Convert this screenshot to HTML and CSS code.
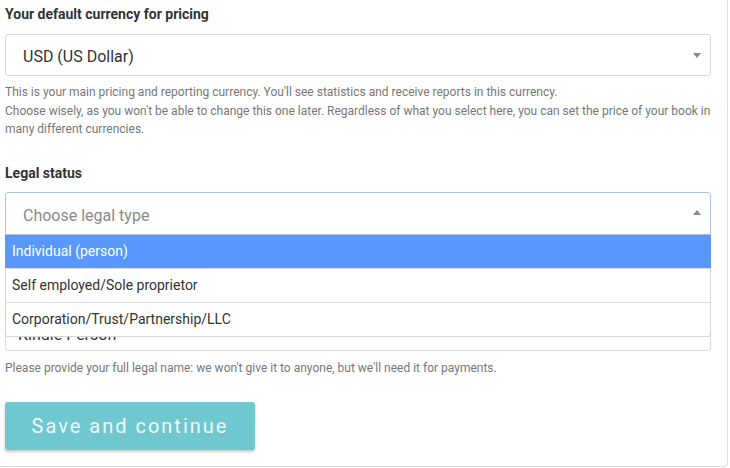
FILE: index.html
```html
<!DOCTYPE html>
<html>
<head>
<meta charset="utf-8">
<link rel="stylesheet" href="styles.css">
</head>
<body>
<div class="card">
  <div class="label label-first">Your default currency for pricing</div>
  <div class="select">
    <span class="select-value">USD (US Dollar)</span>
    <span class="caret caret-down"></span>
  </div>
  <p class="help">This is your main pricing and reporting currency. You'll see statistics and receive reports in this currency.<br>Choose wisely, as you won't be able to change this one later. Regardless of what you select here, you can set the price of your book in many different currencies.</p>

  <div class="label label-second">Legal status</div>
  <div class="select-wrap">
    <div class="select select-open">
      <span class="select-placeholder">Choose legal type</span>
      <span class="caret caret-up"></span>
    </div>
    <ul class="dropdown">
      <li class="option option-active">Individual (person)</li>
      <li class="option">Self employed/Sole proprietor</li>
      <li class="option">Corporation/Trust/Partnership/LLC</li>
    </ul>
  </div>

  <div class="spacer"></div>
  <div class="input">
    <span class="input-value">Kindle Person</span>
  </div>
  <p class="help help-name">Please provide your full legal name: we won't give it to anyone, but we'll need it for payments.</p>

  <button class="btn">Save and continue</button>
</div>
</body>
</html>
```

FILE: styles.css
```css
html, body {
  margin: 0;
  padding: 0;
  background: #fff;
}

body {
  font-family: Roboto, "Liberation Sans", Arial, sans-serif;
  color: #333;
}

.card {
  box-sizing: border-box;
  width: 728px;
  height: 467px;
  padding: 4px 16px 0 5px;
  border-right: 1px solid #dcdcdc;
  border-bottom: 1px solid #dcdcdc;
  border-bottom-right-radius: 4px;
  display: flex;
  flex-direction: column;
  align-items: stretch;
}

.label {
  font-size: 14px;
  font-weight: 700;
  line-height: 20px;
  color: #333;
}

.label-first {
  margin-bottom: 10px;
}

.label-second {
  margin-top: 24px;
  margin-bottom: 9px;
}

.select {
  position: relative;
  box-sizing: border-box;
  height: 42px;
  border: 1px solid #d9d9d9;
  border-radius: 3px;
  display: flex;
  align-items: center;
  padding-left: 17px;
  padding-top: 3px;
  font-size: 16px;
  color: #333;
}

.select-open {
  height: 43px;
  padding-top: 4px;
  border-color: #a9c2ea;
  border-bottom-left-radius: 0;
  border-bottom-right-radius: 0;
}

.select-placeholder {
  color: #8a8a8a;
}

.caret {
  position: absolute;
  right: 9px;
  top: 50%;
  width: 0;
  height: 0;
  border-left: 4px solid transparent;
  border-right: 4px solid transparent;
}

.caret-down {
  margin-top: -2px;
  border-top: 5px solid #888;
}

.caret-up {
  margin-top: -3px;
  border-bottom: 5px solid #888;
}

.help {
  margin: 7px 0 0;
  font-size: 12px;
  line-height: 18.5px;
  color: #777;
}

.select-wrap {
  position: relative;
}

.dropdown {
  position: absolute;
  left: 0;
  right: 0;
  top: 100%;
  margin: 0;
  padding: 0;
  list-style: none;
  background: #fff;
  border: 1px solid #d6d6d6;
  border-top: none;
  border-bottom-left-radius: 3px;
  border-bottom-right-radius: 3px;
  z-index: 2;
}

.option {
  box-sizing: border-box;
  height: 34px;
  padding-left: 6px;
  display: flex;
  align-items: center;
  font-size: 14px;
  color: #333;
  border-top: 1px solid #dedede;
}

.option-active {
  height: 33px;
  border-top: none;
  background: #5897fb;
  color: #fff;
  margin: 0 -1px;
  padding-left: 7px;
}

.spacer {
  height: 74px;
}

.input {
  box-sizing: border-box;
  height: 42px;
  border: 1px solid #d9d9d9;
  border-radius: 3px;
  display: flex;
  align-items: center;
  padding-left: 12px;
  padding-top: 10px;
  font-size: 16px;
  color: #333;
}

.help-name {
  margin-top: 8px;
}

.btn {
  align-self: flex-start;
  margin-top: 25px;
  width: 250px;
  height: 48px;
  border: none;
  border-radius: 3px;
  background: #6fc8cf;
  color: #eefafa;
  font-family: Roboto, "Liberation Sans", Arial, sans-serif;
  font-size: 20px;
  letter-spacing: 2px;
  box-shadow: 0 2px 3px rgba(0, 0, 0, 0.22);
  cursor: pointer;
}
```
